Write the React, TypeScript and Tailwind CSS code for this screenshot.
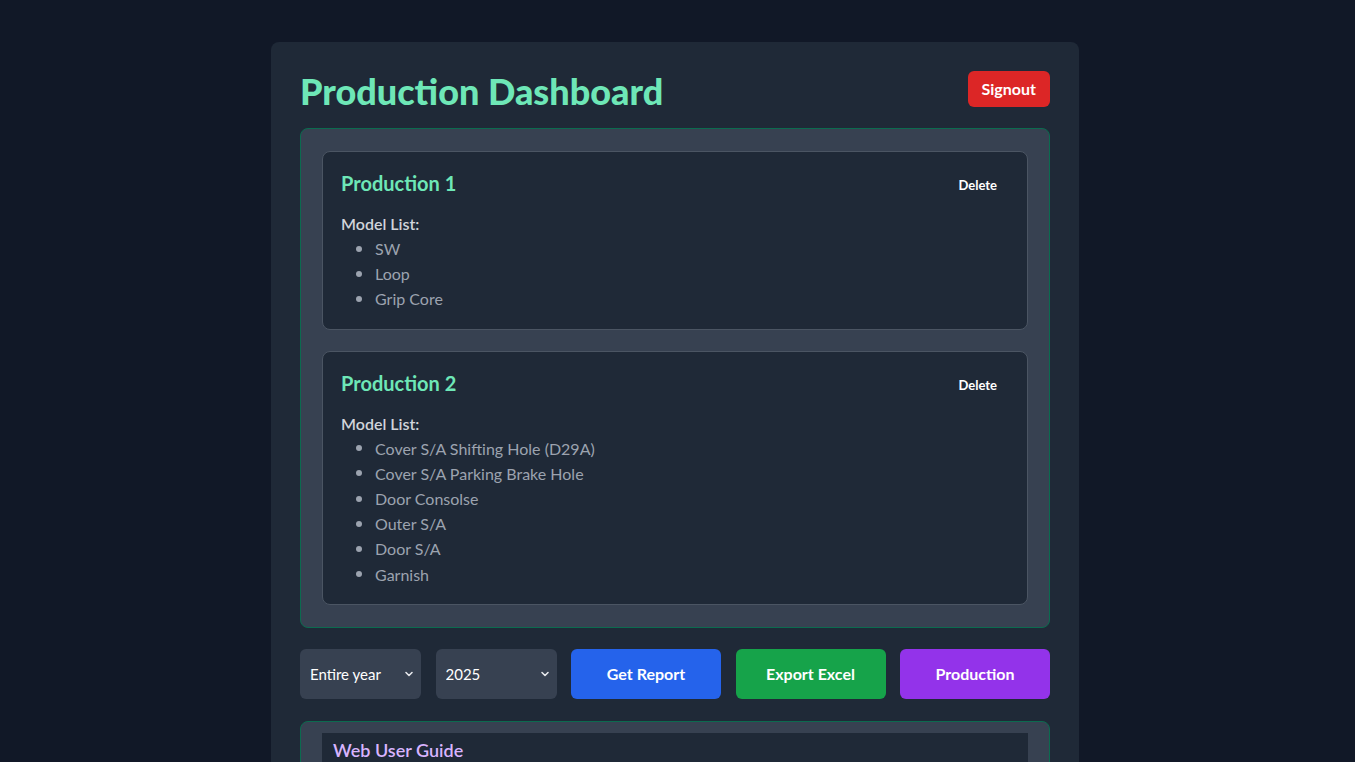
import { useState } from "react";

interface Production {
	id: number;
	name: string;
	models: string[];
}

const initialProductions: Production[] = [
	{ id: 1, name: "Production 1", models: ["SW", "Loop", "Grip Core"] },
	{
		id: 2,
		name: "Production 2",
		models: ["Cover S/A Shifting Hole (D29A)", "Cover S/A Parking Brake Hole", "Door Consolse", "Outer S/A", "Door S/A", "Garnish"],
	},
];

const Chevron = () => (
	<svg className="pointer-events-none absolute right-[7px] top-1/2 -translate-y-1/2" width="10" height="10" viewBox="0 0 10 10" fill="none">
		<path d="M2 3.5 L5 6.5 L8 3.5" stroke="#e5e7eb" strokeWidth="1.6" strokeLinecap="round" strokeLinejoin="round" />
	</svg>
);

const App = () => {
	const [productions, setProductions] = useState(initialProductions);
	const [period, setPeriod] = useState("entire");
	const [year, setYear] = useState("2025");

	const handleDelete = (id: number) => setProductions(productions.filter((p) => p.id !== id));

	return (
		<div className="min-h-[762px] bg-[#111827] pt-[42px] font-['Lato',sans-serif]">
			<div className="ml-[271px] w-[808px] rounded-t-lg bg-[#1f2937] px-[29px] pt-[29px] pb-10">
				<div className="mb-[17px] flex items-start justify-between">
					<h1 className="text-[36px] leading-10 font-black text-[#6ee7b7]">Production Dashboard</h1>
					<button className="h-9 rounded-md bg-[#dc2626] px-[14px] text-base font-bold text-white">Signout</button>
				</div>

				<div className="flex flex-col gap-[21px] rounded-lg border border-[#0b6b4f] bg-[#374151] px-[21px] py-[22px]">
					{productions.map((p) => (
						<div key={p.id} className="rounded-lg border border-[#4b5563] bg-[#1f2937] px-[18px] pt-[17px] pb-[17px]">
							<div className="flex items-center justify-between">
								<h2 className="text-xl leading-7 font-bold text-[#6ee7b7]">{p.name}</h2>
								<button onClick={() => handleDelete(p.id)} className="mr-[12px] mt-[6px] text-[13px] font-bold text-white">
									Delete
								</button>
							</div>
							<p className="mt-[15px] text-base leading-6 font-semibold text-[#d1d5db]">Model List:</p>
							<ul className="text-base text-[#9ca3af]">
								{p.models.map((m) => (
									<li key={m} className="flex items-center leading-[25.2px]">
										<span className="ml-[15px] mr-[13px] h-[6px] w-[6px] rounded-full bg-[#9ca3af]" />
										{m}
									</li>
								))}
							</ul>
						</div>
					))}
				</div>

				<div className="mt-[21px] flex gap-[14.5px]">
					<div className="relative w-[121px]">
						<select value={period} onChange={(e) => setPeriod(e.target.value)} className="h-[50px] w-full appearance-none rounded-md bg-[#374151] pl-[10px] text-[15px] text-white outline-none">
							<option value="entire">Entire year</option>
							<option value="h1">First half</option>
							<option value="h2">Second half</option>
						</select>
						<Chevron />
					</div>
					<div className="relative w-[121px]">
						<select value={year} onChange={(e) => setYear(e.target.value)} className="h-[50px] w-full appearance-none rounded-md bg-[#374151] pl-[10px] text-[15px] text-white outline-none">
							<option value="2025">2025</option>
							<option value="2024">2024</option>
							<option value="2023">2023</option>
						</select>
						<Chevron />
					</div>
					<button className="h-[50px] flex-1 rounded-md bg-[#2563eb] text-base font-bold text-white">Get Report</button>
					<button className="h-[50px] flex-1 rounded-md bg-[#16a34a] text-base font-bold text-white">Export Excel</button>
					<button className="h-[50px] flex-1 rounded-md bg-[#9333ea] text-base font-bold text-white">Production</button>
				</div>

				<div className="mt-[22px] rounded-lg border border-[#0b6b4f] bg-[#374151] px-[21px] pt-[11px] pb-5">
					<div className="bg-[#1f2937] px-[11px] pt-[3px] pb-4">
						<h3 className="text-lg leading-7 font-semibold text-[#d8b4fe]">Web User Guide</h3>
						<p className="mt-2 text-sm text-[#d1d5db]">Follow the steps below to use the production dashboard.</p>
					</div>
				</div>
			</div>
		</div>
	);
};

export default App;
